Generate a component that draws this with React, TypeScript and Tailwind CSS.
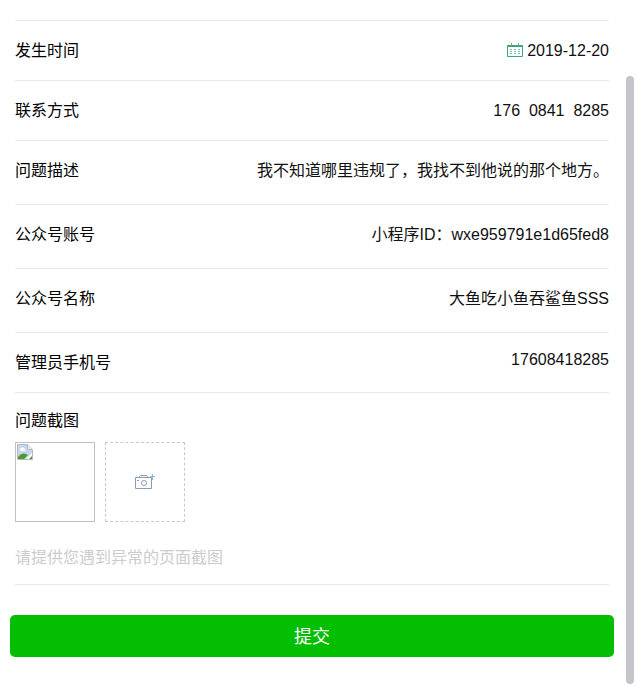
import React from 'react';

const font = { fontFamily: '"Liberation Sans", "Noto Sans CJK SC", sans-serif' };

const CalendarIcon = () => (
  <svg width="16" height="14" viewBox="0 0 16 14" fill="none" className="mr-[4px] shrink-0 -translate-y-[1px]">
    <path d="M0.5 2.5H15.5V13.5H0.5Z" stroke="#35a583" strokeWidth="1" />
    <path d="M1 3.5H15" stroke="#35a583" strokeWidth="1" />
    <path d="M4.5 0V3M11.5 0V3" stroke="#b59a3c" strokeWidth="1" />
    <path
      d="M3 6.5h2M7 6.5h2M11 6.5h2M3 8.5h2M7 8.5h2M11 8.5h2M3 10.5h2M7 10.5h2M11 10.5h2"
      stroke="#7fb8c4"
      strokeWidth="1"
    />
  </svg>
);

const BrokenImageIcon = () => (
  <svg width="16" height="16" viewBox="0 0 16 16" className="block">
    <path d="M0.5 0.5H10.5L15.5 5.5V15.5H0.5Z" fill="#fff" stroke="#b8b8b8" />
    <path d="M1 1H10V6H15V9L9 15H1Z" fill="#c3d7f3" />
    <path d="M3 5c1-2 4-2 5 0 1 1 1 2-1 2H4C3 7 2.5 6 3 5Z" fill="#fff" />
    <path d="M1 15V13C4 9 7 9 9 10L11 11L7 15Z" fill="#4f9a2b" />
    <path d="M12 15L15 12V15Z" fill="#4f9a2b" />
    <path d="M10.5 0.5V5.5H15.5" fill="#eee" stroke="#b8b8b8" />
  </svg>
);

const CameraPlusIcon = () => (
  <svg width="20" height="16" viewBox="0 0 20 16" fill="none">
    <path d="M0.5 3.5H16.5V14.5H0.5Z" stroke="#8a9bb4" strokeWidth="1" />
    <path d="M4 3L5.5 1.5H11.5L13 3" stroke="#8a9bb4" strokeWidth="1" />
    <circle cx="9" cy="9" r="2.5" stroke="#8a9bb4" strokeWidth="1" />
    <path d="M2 6.5H4" stroke="#8a9bb4" strokeWidth="1" />
    <path d="M17.5 0V6M15 2.5H20" stroke="#8fb4d8" strokeWidth="1" />
  </svg>
);

interface RowProps {
  label: string;
  height: string;
  children: React.ReactNode;
}

const Row = ({ label, height, children }: RowProps) => (
  <div className={`flex items-center justify-between border-b border-[#e8e8e8] ${height}`}>
    <span className="text-black">{label}</span>
    <div className="flex items-center text-[#111]">{children}</div>
  </div>
);

export default function App() {
  return (
    <div className="relative h-[687px] w-[636px] overflow-hidden bg-white text-[16px] leading-[22px]" style={font}>
      <div className="px-[15px] pt-[20px] w-[624px]">
        <div className="border-t border-[#e8e8e8]">
          <Row label="发生时间" height="h-[60px]">
            <CalendarIcon />
            2019-12-20
          </Row>
          <Row label="联系方式" height="h-[60px]">
            <span className="whitespace-pre">176  0841  8285</span>
          </Row>
          <Row label="问题描述" height="h-[64px] pb-[4px]">
            我不知道哪里违规了，我找不到他说的那个地方。
          </Row>
          <Row label="公众号账号" height="h-[64px] pb-[4px]">
            小程序ID：wxe959791e1d65fed8
          </Row>
          <Row label="公众号名称" height="h-[64px] pb-[4px]">
            大鱼吃小鱼吞鲨鱼SSS
          </Row>
          <Row label="管理员手机号" height="h-[60px]">
            <span className="-translate-y-[3px]">17608418285</span>
          </Row>
        </div>
        <div className="border-b border-[#e8e8e8] pt-[17px] pb-[15px]">
          <div className="text-black">问题截图</div>
          <div className="mt-[10px] flex gap-[10px]">
            <div className="h-[80px] w-[80px] border border-[#c0c0c0] pt-[1px] pl-[1px]">
              <BrokenImageIcon />
            </div>
            <div className="flex h-[80px] w-[80px] items-center justify-center border border-dashed border-[#c8c8c8]">
              <CameraPlusIcon />
            </div>
          </div>
          <div className="mt-[25px] text-[#cccccc]">请提供您遇到异常的页面截图</div>
        </div>
      </div>
      <div className="mt-[30px] px-[10px] w-[624px]">
        <button className="h-[42px] w-full rounded-[5px] bg-[#04be02] pt-[2px] text-[18px] text-white">提交</button>
      </div>
      <div className="absolute top-[76px] left-[626px] h-[608px] w-[8px] rounded-[4px] bg-[#c4c4ca]" />
    </div>
  );
}
